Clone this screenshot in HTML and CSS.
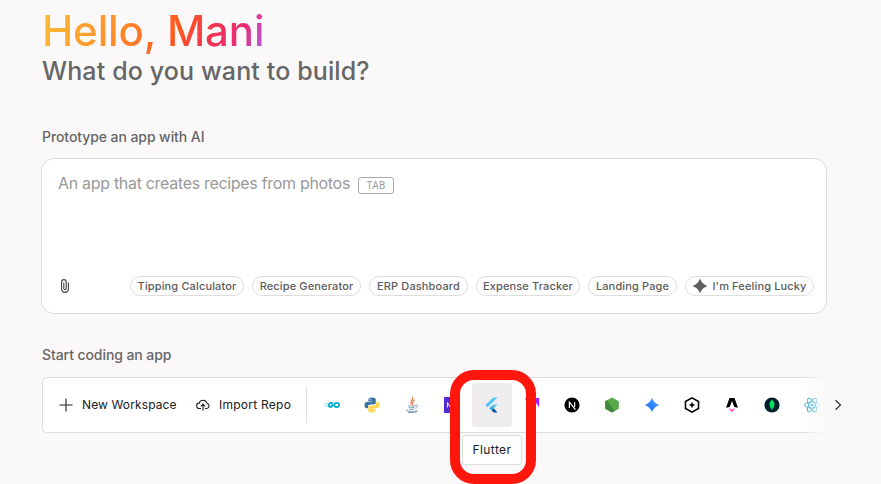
FILE: index.html
```html
<!DOCTYPE html>
<html lang="en">
<head>
<meta charset="utf-8">
<title>Start building</title>
<link rel="stylesheet" href="styles.css">
</head>
<body>
<main class="page">
  <h1 class="hello"><span>Hello, Mani</span></h1>
  <p class="question">What do you want to build?</p>
  <h2 class="label label-ai">Prototype an app with AI</h2>
  <section class="prompt">
    <div class="prompt-text"><span class="placeholder">An app that creates recipes from photos</span><kbd class="tab">TAB</kbd></div>
    <div class="prompt-actions">
      <svg class="clip" width="12" height="16" viewBox="0 0 12 16" fill="none" stroke="#444" stroke-width="1.1"><path d="M9.400 4.500v6.300a3.400 3.600 0 0 1-6.800 0V4a2.300 2.400 0 0 1 4.600 0v6.600a1.200 1.200 0 0 1-2.400 0V4.500"/></svg>
      <div class="chips">
        <span class="chip c1">Tipping Calculator</span>
        <span class="chip c2">Recipe Generator</span>
        <span class="chip c3">ERP Dashboard</span>
        <span class="chip c4">Expense Tracker</span>
        <span class="chip c5">Landing Page</span>
        <span class="chip c6"><svg width="16" height="16" viewBox="0 0 16 16" fill="#5f5f5f"><path d="M8 .5Q9.800 6.200 15.500 8 9.800 9.800 8 15.500 6.200 9.800 .5 8 6.200 6.200 8 .5Z"/></svg>I'm Feeling Lucky</span>
      </div>
    </div>
  </section>
  <h2 class="label label-code">Start coding an app</h2>
  <section class="row">
    <div class="toolbar">
      <div class="action new"><svg width="14" height="14" viewBox="0 0 14 14" stroke="#202020" stroke-width="1.1"><path d="M7 .5v13M.5 7h13"/></svg><span>New Workspace</span></div>
      <div class="action import"><svg width="14" height="12" viewBox="0 0 14 12" fill="none" stroke="#202020" stroke-width="1.1"><path d="M5 9.500H3.500A2.700 2.700 0 0 1 3.200 4.100 4 4 0 0 1 10.900 4.200 2.700 2.700 0 0 1 10.700 9.500H9M7 11.500V5.200M4.800 7.300 7 5.100l2.200 2.200"/></svg><span>Import Repo</span></div>
      <div class="divider"></div>
      <div class="slots">
        <div class="slot"><svg width="16" height="16" viewBox="0 0 16 16"  fill="none"><path d="M1 6.500h3M0 8h3.500M2 9.500h2" stroke="#8bdcec" stroke-width=".8"/><path d="M8.900 6.300C7.500 5 5 5.800 4.800 8s2.700 3 3.900.2H7" stroke="#08acd0" stroke-width="1.800"/><ellipse cx="12.700" cy="7.900" rx="2.400" ry="2.100" stroke="#08acd0" stroke-width="1.800"/></svg></div>
        <div class="slot"><svg width="16" height="16" viewBox="0 0 16 16"><path fill="#3874a5" d="M8 .5c-3 0-3.700 1-3.700 2.500v1.500h4V5H2.700C1.200 5 .5 6.500.5 8.300s.9 3 2.200 3H4V9.500c0-1.300 1-2 2.200-2h3.600c1.200 0 2-.8 2-2V3C11.800 1.200 10.500.5 8 .5Z"/><path fill="#ffd951" d="M8 15.500c3 0 3.700-1 3.700-2.500v-1.500h-4V11h5.600c1.500 0 2.200-1.500 2.200-3.300s-.9-3-2.200-3H12v1.800c0 1.300-1 2-2.200 2H6.200c-1.200 0-2 .8-2 2V13c0 1.800 1.300 2.500 3.800 2.500Z"/><circle cx="6" cy="2.600" r=".7" fill="#fff"/><circle cx="10" cy="13.400" r=".7" fill="#fff"/></svg></div>
        <div class="slot"><svg width="16" height="16" viewBox="0 0 16 16" fill="none"><path d="M8.500.2C9.500 3 5.500 3.800 7.500 7.500M10.700 2.800C7 4.800 10 5.500 8.300 8" stroke="#e47a3d" stroke-width="1.200"/><path d="M4.500 8.300c-2 1 7 1 7.200.2M4.500 10.200c1.300.9 4.300.8 6 .1M5 12c1.500.8 3.500.7 5 .1M3.500 12.700c-5 1.900 8.700 2.500 9.500.5M11.500 8.200c3-.5 2.500 2.500-.2 3.100M4 15.300c4 .5 8.200.2 9.700-1.100" stroke="#6d91ad" stroke-width=".9"/></svg></div>
        <div class="slot"><svg width="16" height="16" viewBox="0 0 16 16"><path fill="#512bd4" d="M0 0h16v16H0z"/><path d="M3.500 10.500v-5l3 5v-5M9 5.500v5h2M9 8h2M9 5.500h5M12.700 5.500v5" fill="none" stroke="#fff" stroke-width=".9"/></svg></div>
        <div class="slot selected"><svg width="16" height="16" viewBox="0 0 16 16"><path fill="#54c5f8" d="M9.300.5h4.200L3.500 10.300 1.400 8.100ZM9.300 7.400h4.200L9.700 11.200l-2.200-2.100-1.700 1.600Z"/><path fill="#29a9e8" d="m5.400 11.200 2.200-2.200 2.200 2.200-2.200 2.200Z"/><path fill="#01579b" d="m7.600 13.400 2.200-2.200 3.700 4.300H9.700Z"/></svg></div>
        <div class="slot"><svg width="16" height="16" viewBox="0 0 16 16"><path fill="#a51bff" d="M1 1.500h9L5 10ZM9 1.500 15.200.8v9.500Z"/></svg></div>
        <div class="slot"><svg width="16" height="16" viewBox="0 0 16 16"><circle cx="8" cy="8" r="7.600"/><path d="M5.400 11V5.200l6 7.500M10.600 5v5" fill="none" stroke="#fff" stroke-width="1.200"/></svg></div>
        <div class="slot"><svg width="16" height="16" viewBox="0 0 16 16"><path fill="#54a949" d="m8 .4 6.800 3.800v7.600L8 15.600l-6.800-3.800V4.200Z"/><path fill="#41873f" d="m1.200 4.200 1.800-1L10.500 14.200 8 15.600l-6.800-3.800Z"/></svg></div>
        <div class="slot"><svg width="16" height="16" viewBox="0 0 16 16"><defs><linearGradient id="gem" x1="0" y1="1" x2="1" y2="0"><stop stop-color="#1769f5"/><stop offset="1" stop-color="#51a2ff"/></linearGradient></defs><path fill="url(#gem)" d="M8 .7Q9.800 6.200 15.300 8 9.800 9.800 8 15.300 6.200 9.800.7 8 6.200 6.200 8 .7Z"/></svg></div>
        <div class="slot"><svg width="16" height="16" viewBox="0 0 16 16"><path d="m8 .9 6.500 3.600v7L8 15.100l-6.500-3.600v-7Z" fill="none" stroke="#000" stroke-width="1.600"/><path d="M8 4.700 9 7l2.300 1L9 9l-1 2.300L7 9 4.700 8 7 7Z"/></svg></div>
        <div class="slot"><svg width="16" height="16" viewBox="0 0 16 16"><path d="M5.500 1h5l3.500 9.700-3.700-.7L8 4l-2.300 6-3.700.7Z"/><path fill="#ff69d2" d="M5 11.300q3 1.400 6 0-.2 2.300-2.100 2.800L8 15.800l-1.500-2Q5 13.500 5 11.300Z"/></svg></div>
        <div class="slot"><svg width="16" height="16" viewBox="0 0 16 16"><circle cx="8" cy="8" r="7.600" fill="#001e2b"/><path fill="#00ed64" d="M8 2.700q5 4.300.4 9.200V13h-.8v-1.100Q3 7 8 2.700Z"/><path d="M8 6v7" stroke="#00a94d" stroke-width=".7"/></svg></div>
        <div class="slot"><svg width="16" height="16" viewBox="0 0 16 16" fill="none" stroke="#149eca" stroke-width=".9"><g><ellipse cx="8" cy="8" rx="7.500" ry="3"/><ellipse cx="8" cy="8" rx="7.500" ry="3" transform="rotate(60 8 8)"/><ellipse cx="8" cy="8" rx="7.500" ry="3" transform="rotate(120 8 8)"/></g><circle cx="8" cy="8" r="1" fill="#149eca"/></svg></div>
      </div>
    </div>
    <svg class="next" width="8" height="12" viewBox="0 0 8 12" fill="none" stroke="#333" stroke-width="1.200"><path d="m1.500 1.300 5 4.700-5 4.700"/></svg>
    <div class="fade"></div>
    <div class="tooltip">Flutter</div>
    <div class="ring"></div>
  </section>
</main>
</body>
</html>
```

FILE: styles.css
```css
* { box-sizing: border-box; }
body {
  margin: 0;
  background: #faf8f9;
  font-family: Inter, "Liberation Sans", sans-serif;
  overflow: hidden;
}
svg { display: block; flex: none; }
.page { height: 484px; padding: 6px 54px 0 41px; overflow: hidden; }
.hello {
  margin: 0 0 0 1px;
  height: 50px;
  font: 500 42px/50px Inter, sans-serif;
  letter-spacing: -0.15px;
  white-space: nowrap;
}
.hello span {
  display: inline-block;
  background: linear-gradient(115deg, #fdbb38 4%, #ff9029 33%, #ff571f 60%, #f23454 75%, #e62c75 87%, #b65bd5 97%);
  -webkit-background-clip: text;
  background-clip: text;
  color: transparent;
}
.question {
  margin: 0 0 0 1px;
  height: 30px;
  color: #666;
  font: 500 25px/30px Inter, sans-serif;
  letter-spacing: 0.13px;
  white-space: nowrap;
}
.label {
  margin: 0 0 0 1px;
  color: #666;
  font-size: 14px;
  font-weight: 500;
  line-height: 20px;
  letter-spacing: -0.08px;
}
.label-ai { margin-top: 41px; }
.prompt {
  display: flex;
  flex-direction: column;
  justify-content: space-between;
  height: 156px;
  margin-top: 11px;
  padding: 14px 12px 17px 16px;
  border: 1px solid #dedddd;
  border-radius: 13px;
  background: #fff;
}
.prompt-text { display: flex; align-items: center; height: 20px; gap: 8px; }
.placeholder { color: #999; font-size: 16px; letter-spacing: -0.31px; white-space: nowrap; }
.tab {
  width: 36px;
  height: 17px;
  margin-top: 5px;
  border: 1px solid #aaa;
  border-radius: 3px;
  color: #999;
  font: 10px/15px Roboto, sans-serif;
  letter-spacing: .2px;
  text-align: center;
}
.prompt-actions { display: flex; justify-content: space-between; align-items: center; }
.clip { margin-left: 1px; }
.chips { display: flex; gap: 8px; }
.chip {
  display: flex;
  align-items: center;
  justify-content: center;
  height: 20px;
  border: 1px solid #dedede;
  border-radius: 10px;
  color: #5c5c5c;
  font-size: 11px;
  font-weight: 500;
  letter-spacing: .14px;
  white-space: nowrap;
}
.c1 { width: 114px; }
.c2 { width: 109px; }
.c3 { width: 99px; }
.c4 { width: 104px; }
.c5 { width: 89px; }
.c6 { width: 129px; gap: 4px; }
.label-code { margin-top: 31px; }
.row { position: relative; display: flex; align-items: center; margin: 12px 0 0 1px; height: 56px; }
.toolbar {
  display: flex;
  align-items: center;
  width: 784px;
  height: 56px;
  flex: none;
  overflow: hidden;
  border: 1px solid #dedddd;
  border-right: 0;
  border-radius: 5px 0 0 5px;
  background: #fff;
}
.action {
  display: flex;
  align-items: center;
  flex: none;
  position: relative;
  top: -1px;
  color: #202020;
  font-size: 12px;
  font-weight: 400;
  letter-spacing: .12px;
  white-space: nowrap;
}
.new { width: 137px; padding-left: 16px; gap: 9px; }
.import { width: 126px; padding-left: 16px; gap: 9px; letter-spacing: .25px; }
.action svg { position: relative; top: 1px; }
.divider { flex: none; width: 1px; height: 36px; background: #dedede; }
.slots { display: flex; flex: none; margin-left: 5px; }
.slot { display: flex; align-items: center; justify-content: center; width: 40px; height: 44px; border-radius: 4px; }
.selected { background: #eeecec; }
.next { margin-left: 8px; }
.fade {
  position: absolute;
  left: 760px;
  top: 0;
  width: 25px;
  height: 56px;
  background: linear-gradient(to right, #faf8f900, #faf8f9 90%);
}
.tooltip {
  position: absolute;
  left: 420px;
  top: 58px;
  width: 60px;
  height: 30px;
  border: 1px solid #dedddd;
  border-radius: 3px;
  background: #fff;
  color: #202020;
  font-size: 12px;
  font-weight: 400;
  line-height: 28px;
  letter-spacing: .4px;
  text-align: center;
}
.ring {
  position: absolute;
  left: 408px;
  top: -7px;
  width: 86px;
  height: 114px;
  border: 10px solid #ff170d;
  border-radius: 24px;
}
```
